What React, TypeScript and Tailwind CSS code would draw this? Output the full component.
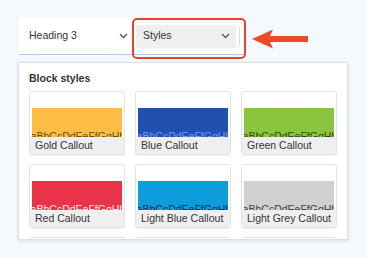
const callouts = [
  { name: 'Gold Callout', band: 'bg-[#fcbd45]', ink: 'text-[#6b4f12]' },
  { name: 'Blue Callout', band: 'bg-[#2150ae]', ink: 'text-[#6f9cf2]' },
  { name: 'Green Callout', band: 'bg-[#8bc540]', ink: 'text-[#2f4a12]' },
  { name: 'Red Callout', band: 'bg-[#e8334a]', ink: 'text-[#ffe3e6]' },
  { name: 'Light Blue Callout', band: 'bg-[#0d9ddb]', ink: 'text-[#0b2f6b]' },
  { name: 'Light Grey Callout', band: 'bg-[#d0d0d0]', ink: 'text-[#444444]' },
  { name: 'Purple Callout', band: 'bg-[#7b4fb0]', ink: 'text-[#efe6ff]' },
  { name: 'Dark Callout', band: 'bg-[#333333]', ink: 'text-[#dddddd]' },
  { name: 'Plain Callout', band: 'bg-[#ffffff]', ink: 'text-[#333333]' },
];

function Chevron() {
  return (
    <svg width="9" height="6" viewBox="0 0 9 6" className="shrink-0">
      <polyline points="1,1 4.5,4.5 8,1" fill="none" stroke="#555" strokeWidth="1.3" />
    </svg>
  );
}

export default function App() {
  return (
    <div className="relative w-[367px] h-[258px] overflow-hidden bg-[#f5f9fd] font-['Liberation_Sans',Arial,sans-serif] text-[#333]">
      {/* toolbar */}
      <div className="flex items-center ml-[19px] mt-[18px] w-[226px] h-[37px] bg-white border-b border-[#a9c8ec]">
        <div className="flex items-center justify-between w-[113px] pl-[10px] pr-[4px] text-[10.5px]">
          <span>Heading 3</span>
          <Chevron />
        </div>
        <div className="flex items-center justify-between ml-[4px] w-[100px] h-[23px] pl-[7px] pr-[6px] bg-[#efefef] text-[10.5px]">
          <span>Styles</span>
          <Chevron />
        </div>
        <div className="ml-[3px] w-px h-[19px] bg-[#dddddd]" />
      </div>

      {/* dropdown */}
      <div className="mt-[7px] ml-[18px] w-[330px] h-[178px] overflow-hidden bg-white border border-[#dcdfe3] shadow-[0_1px_3px_rgba(0,0,0,0.12)] pl-[10px] pt-[8px]">
        <div className="text-[10.5px] leading-[14px] font-bold">Block styles</div>
        <div className="grid grid-cols-[96px_96px_96px] gap-x-[10px] gap-y-[9px] mt-[6px]">
          {callouts.map((c) => (
            <div key={c.name} className="h-[64px] flex flex-col border border-[#e3e3e3] rounded-[3px] bg-white shadow-[0_1px_1px_rgba(0,0,0,0.06)] overflow-hidden">
              <div className="h-[16px]" />
              <div className={`mx-[2px] h-[29px] flex flex-col justify-end items-center overflow-hidden ${c.band}`}>
                <span className={`whitespace-nowrap text-[10.5px] leading-[12px] mb-[-5px] ${c.ink}`}>AaBbCcDdEeFfGgHhIi</span>
              </div>
              <div className="flex-1 flex items-center pl-[5px] bg-[#efefef] text-[10.5px] whitespace-nowrap">{c.name}</div>
            </div>
          ))}
        </div>
      </div>

      {/* annotation */}
      <div className="absolute left-[132px] top-[18px] w-[114px] h-[41px] border-2 border-[#e8432a] rounded-[5px]" />
      <svg className="absolute left-[252px] top-[29px]" width="57" height="20" viewBox="0 0 57 20">
        <path d="M0 10 L21 0.5 L18 7 L56 7 L56 13 L18 13 L21 19.5 Z" fill="#ef4a26" />
      </svg>
    </div>
  );
}
